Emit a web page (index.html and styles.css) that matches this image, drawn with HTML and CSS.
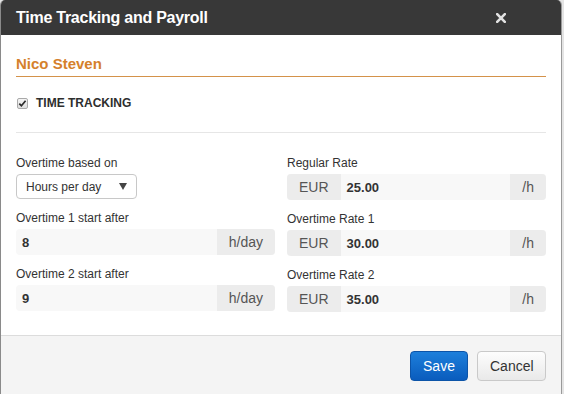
FILE: index.html
```html
<!DOCTYPE html>
<html>
<head>
<meta charset="utf-8">
<link rel="stylesheet" href="styles.css">
</head>
<body>
<div class="dialog">
  <div class="dialog-header">
    <h2 class="dialog-title">Time Tracking and Payroll</h2>
    <span class="close"><svg width="10" height="10" viewBox="0 0 10 10"><path d="M1.2 1.2 L8.8 8.8 M8.8 1.2 L1.2 8.8" stroke="#e2e2e2" stroke-width="2.6" stroke-linecap="square"/></svg></span>
  </div>
  <div class="dialog-body">
    <h3 class="employee-name">Nico Steven</h3>
    <div class="check-row">
      <span class="checkbox"><svg width="9" height="9" viewBox="0 0 9 9"><path d="M1.3 4.6 L3.4 6.8 L7.6 1.8" stroke="#2b2b2b" stroke-width="1.7" fill="none"/></svg></span>
      <span class="check-label">TIME TRACKING</span>
    </div>
    <hr class="divider">
    <div class="form-grid">
      <div class="col">
        <div class="field">
          <div class="field-label">Overtime based on</div>
          <div class="select"><span>Hours per day</span><span class="caret"></span></div>
        </div>
        <div class="field">
          <div class="field-label">Overtime 1 start after</div>
          <div class="input-group"><span class="input-value">8</span><span class="addon">h/day</span></div>
        </div>
        <div class="field">
          <div class="field-label">Overtime 2 start after</div>
          <div class="input-group"><span class="input-value">9</span><span class="addon">h/day</span></div>
        </div>
      </div>
      <div class="col">
        <div class="field">
          <div class="field-label">Regular Rate</div>
          <div class="input-group tall"><span class="addon">EUR</span><span class="input-value">25.00</span><span class="addon">/h</span></div>
        </div>
        <div class="field">
          <div class="field-label">Overtime Rate 1</div>
          <div class="input-group tall"><span class="addon">EUR</span><span class="input-value">30.00</span><span class="addon">/h</span></div>
        </div>
        <div class="field">
          <div class="field-label">Overtime Rate 2</div>
          <div class="input-group tall"><span class="addon">EUR</span><span class="input-value">35.00</span><span class="addon">/h</span></div>
        </div>
      </div>
    </div>
  </div>
  <div class="dialog-footer">
    <button class="btn btn-primary">Save</button>
    <button class="btn btn-default">Cancel</button>
  </div>
</div>
</body>
</html>
```

FILE: styles.css
```css
html, body {
  margin: 0;
  padding: 0;
}
body {
  background: #e4e4e4;
  font-family: "Liberation Sans", Arial, sans-serif;
  color: #333;
  width: 564px;
  height: 394px;
  overflow: hidden;
}
.dialog {
  width: 560px;
  height: 394px;
  border-left: 1px solid #8a8a8a;
  border-right: 1px solid #9a9a9a;
  border-radius: 5px 5px 0 0;
  background: #fff;
  display: flex;
  flex-direction: column;
  overflow: hidden;
}
.dialog-header {
  height: 35px;
  background: #383838;
  display: flex;
  align-items: center;
  justify-content: space-between;
  padding: 0 55px 0 15px;
  flex-shrink: 0;
}
.dialog-title {
  margin: 0;
  font-size: 16px;
  line-height: 35px;
  font-weight: bold;
  color: #fff;
  letter-spacing: -0.25px;
}
.close {
  display: flex;
  margin-top: 1px;
}
.dialog-body {
  padding: 20px 15px 23px;
}
.employee-name {
  margin: 0;
  font-size: 15px;
  line-height: 18px;
  font-weight: bold;
  color: #d5812b;
  padding-bottom: 3px;
  border-bottom: 1px solid #d4924a;
}
.check-row {
  margin-top: 18px;
  height: 14px;
  display: flex;
  align-items: center;
}
.checkbox {
  width: 9px;
  height: 9px;
  border: 1px solid #a9a9a9;
  border-radius: 2px;
  background: linear-gradient(#f4f4f4, #dedede);
  display: flex;
  align-items: center;
  justify-content: center;
  margin-top: 2px;
  margin-left: 1px;
}
.check-label {
  margin-left: 8px;
  font-size: 12px;
  line-height: 14px;
  font-weight: bold;
  color: #2e2e2e;
  margin-top: 2px;
}
.divider {
  margin: 23px 0 0;
  border: 0;
  border-top: 1px solid #e6e6e6;
  height: 0;
}
.form-grid {
  margin-top: 23px;
  display: grid;
  grid-template-columns: 1fr 1fr;
  column-gap: 12px;
  align-items: start;
}
.col {
  display: flex;
  flex-direction: column;
  gap: 12px;
}
.field-label {
  font-size: 12px;
  line-height: 14px;
  color: #333;
  margin-bottom: 4px;
}
.select {
  width: 119px;
  height: 23px;
  border: 1px solid #c8c8c8;
  border-radius: 4px;
  box-sizing: content-box;
  display: flex;
  align-items: center;
  justify-content: space-between;
  padding: 0 8px 0 9px;
  box-sizing: border-box;
  width: 121px;
  height: 25px;
  font-size: 12px;
  color: #333;
}
.caret {
  width: 0;
  height: 0;
  border-left: 4px solid transparent;
  border-right: 4px solid transparent;
  border-top: 7px solid #444;
  margin-right: 1px;
}
.input-group {
  height: 26px;
  display: flex;
  border-radius: 4px;
  overflow: hidden;
  background: #f8f8f8;
}
.input-value {
  flex: 1;
  display: flex;
  align-items: center;
  padding: 0 6px;
  font-size: 13px;
  font-weight: bold;
  color: #333;
}
.addon {
  display: flex;
  align-items: center;
  padding: 0 12px;
  background: #ececec;
  font-size: 14px;
  color: #555;
}
.dialog-footer {
  flex: 1;
  border-top: 1px solid #dcdcdc;
  background: #f4f4f4;
  display: flex;
  justify-content: flex-end;
  align-items: flex-start;
  padding: 15px 15px 0;
  gap: 9px;
}
.btn {
  height: 30px;
  border-radius: 4px;
  font-family: "Liberation Sans", Arial, sans-serif;
  font-size: 14px;
  padding: 0 12px;
  cursor: pointer;
}
.btn-primary {
  width: 58px;
  color: #fff;
  border: 1px solid #0c54a8;
  background: linear-gradient(#1d7fdb, #0a5cbd);
}
.btn-default {
  width: 69px;
  color: #333;
  border: 1px solid #c9c9c9;
  background: linear-gradient(#fdfdfd, #e9e9e9);
}
```
